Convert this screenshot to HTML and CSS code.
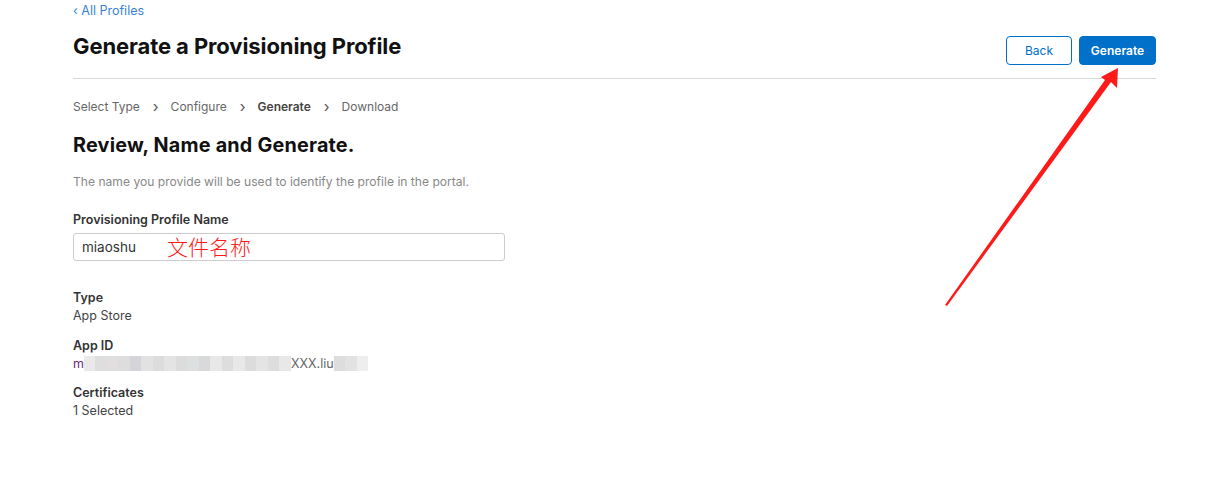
FILE: index.html
```html
<!DOCTYPE html>
<html>
<head>
<meta charset="utf-8">
<link rel="stylesheet" href="styles.css">
</head>
<body>
<div class="page">
  <a class="back-link" href="#">‹ All Profiles</a>
  <header class="header">
    <h1 class="title">Generate a Provisioning Profile</h1>
    <div class="actions">
      <button class="btn btn-outline">Back</button>
      <button class="btn btn-primary">Generate</button>
    </div>
  </header>
  <nav class="steps">
    <span class="step">Select Type</span><span class="chev">›</span>
    <span class="step">Configure</span><span class="chev">›</span>
    <span class="step step-current">Generate</span><span class="chev">›</span>
    <span class="step">Download</span>
  </nav>
  <h2 class="section-title">Review, Name and Generate.</h2>
  <p class="desc">The name you provide will be used to identify the profile in the portal.</p>
  <label class="field-label">Provisioning Profile Name</label>
  <div class="input">
    <span class="input-value">miaoshu</span>
    <span class="annot">文件名称</span>
  </div>
  <dl class="info">
    <dt>Type</dt>
    <dd>App Store</dd>
    <dt>App ID</dt>
    <dd class="appid"><span class="m">m</span><span class="blur"><i style="background:#e9e9e9"></i><i style="background:#dedede"></i><i style="background:#e2dede"></i><i style="background:#dddddd"></i><i style="background:#d4d4da"></i><i style="background:#e2e2e2"></i><i style="background:#dcdcdc"></i><i style="background:#e4e4e4"></i><i style="background:#dcdcdc"></i><i style="background:#dde0e0"></i><i style="background:#d9d9d9"></i><i style="background:#e8e8e8"></i><i style="background:#dddddd"></i><i style="background:#e8e8e8"></i><i style="background:#dcdcdc"></i><i style="background:#e4e4e4"></i><i style="background:#dddddd"></i><i style="background:#e8e8e8"></i></span><span class="vis">XXX.liu</span><span class="blur"><i style="background:#dddddd"></i><i style="background:#e2e2e2"></i><i style="background:#eeeeee"></i></span></dd>
    <dt>Certificates</dt>
    <dd>1 Selected</dd>
  </dl>
  <svg class="arrow" width="1232" height="489" viewBox="0 0 1232 489">
    <polygon fill="#ff1a1a" points="945,305 1105,80 1101,77 1118,68 1117,88 1111,82 947,306"/>
  </svg>
</div>
</body>
</html>
```
FILE: styles.css
```css
* { box-sizing: border-box; }
html, body { margin: 0; padding: 0; background: #fff; }
body {
  font-family: Inter, "Open Sans", "Liberation Sans", sans-serif;
  color: #333;
}
.page {
  position: relative;
  width: 1232px;
  height: 489px;
  padding: 3px 76px 0 73px;
}
.back-link {
  display: block;
  font-size: 12.5px;
  line-height: 16px;
  color: #3a82d6;
  text-decoration: none;
}
.header {
  display: flex;
  justify-content: space-between;
  align-items: flex-start;
  margin-top: 17px;
  padding-bottom: 13px;
  border-bottom: 1px solid #d8d8d8;
}
.title {
  margin: -4px 0 0;
  font-size: 22px;
  line-height: 28px;
  font-weight: 700;
  color: #111;
  letter-spacing: -0.1px;
}
.actions {
  display: flex;
  gap: 7px;
}
.btn {
  height: 29px;
  border-radius: 4px;
  font-family: inherit;
  font-size: 12px;
  padding: 0;
}
.btn-outline {
  width: 66px;
  background: #fff;
  border: 1px solid #0070c9;
  color: #0070c9;
}
.btn-primary {
  width: 77px;
  background: #0070c9;
  border: 1px solid #0070c9;
  color: #fff;
  font-weight: 600;
}
.steps {
  display: flex;
  align-items: center;
  margin-top: 20px;
  font-size: 12px;
  line-height: 16px;
  color: #666;
}
.chev {
  margin: 0 12px 0 13px;
  font-size: 15px;
  color: #555;
}
.step-current {
  font-weight: 600;
  color: #444;
}
.section-title {
  margin: 18px 0 0;
  font-size: 19.8px;
  line-height: 24px;
  font-weight: 700;
  color: #111;
  letter-spacing: 0.2px;
}
.desc {
  margin: 17px 0 0;
  font-size: 12.1px;
  line-height: 16px;
  color: #888;
}
.field-label {
  display: block;
  margin-top: 22px;
  font-size: 12.5px;
  line-height: 16px;
  font-weight: 600;
  color: #333;
}
.input {
  display: flex;
  align-items: center;
  width: 432px;
  height: 28px;
  margin-top: 5px;
  border: 1px solid #ccc;
  border-radius: 3px;
  padding-left: 8px;
}
.input-value {
  font-size: 13.5px;
  color: #333;
  width: 85px;
}
.annot {
  font-family: "Noto Sans CJK SC", sans-serif;
  font-size: 21px;
  font-weight: 300;
  color: #ff1a1a;
  line-height: 24px;
  margin-top: -2px;
}
.info {
  margin: 28px 0 0;
  font-size: 12.5px;
  line-height: 18px;
}
.info dt {
  font-weight: 600;
  color: #333;
}
.info dd {
  margin: 0 0 11.5px;
  color: #444;
}
.appid {
  display: flex;
  align-items: center;
}
.appid .m { color: #6b2a7a; }
.blur { display: flex; height: 15px; }
.blur i { display: block; width: 11.5px; height: 15px; }
.vis { color: #666; }
.arrow {
  position: absolute;
  left: 0;
  top: 0;
  pointer-events: none;
}
```
